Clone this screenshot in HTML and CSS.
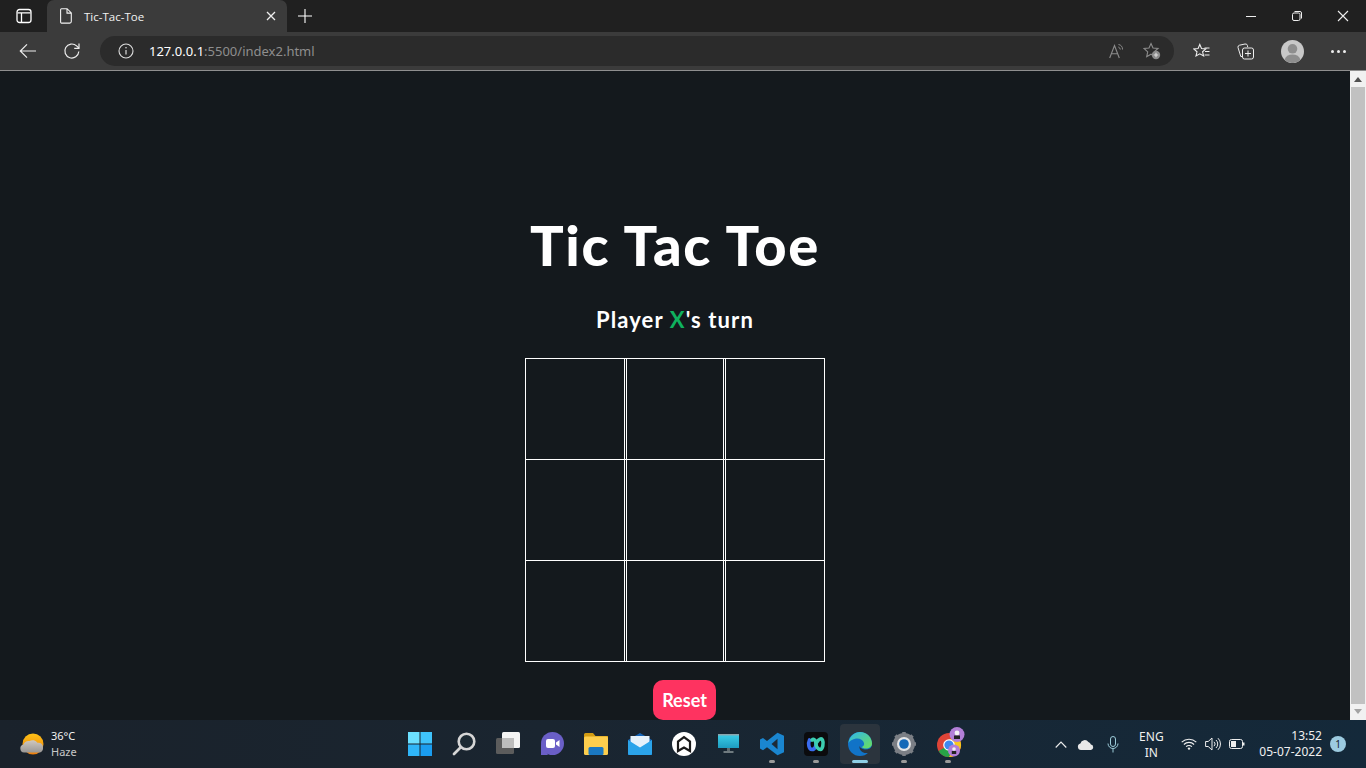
FILE: index.html
```html
<!DOCTYPE html>
<html lang="en">
<head>
    <meta charset="UTF-8">
    <title>Tic-Tac-Toe</title>
    <link rel="stylesheet" href="styles.css">
</head>
<body>

<div class="tabstrip">
    <svg class="tabs-btn" width="16" height="16" viewBox="0 0 16 16"><rect x="1" y="1.5" width="14" height="13" rx="2.5" fill="none" stroke="#fff" stroke-width="1.3"/><path d="M1.5 4.8h13M5.5 4.8v9.5" stroke="#fff" stroke-width="1.3" fill="none"/></svg>
    <div class="tab">
        <svg width="12" height="16" viewBox="0 0 12 16"><path d="M1.5.7h5.6l4.2 4.2v8.6a1.6 1.6 0 0 1-1.6 1.6H1.5A1 1 0 0 1 .6 14V1.700a1 1 0 0 1 .9-1zM7 .9v4.200h4.200" fill="none" stroke="#f2f2f2" stroke-width="1.100"/></svg>
        <span class="tab-title">Tic-Tac-Toe</span>
        <svg class="tab-close" width="10" height="10" viewBox="0 0 10 10"><path d="M1 1l8 8M9 1l-8 8" stroke="#eee" stroke-width="1.300"/></svg>
    </div>
    <svg class="new-tab" width="14" height="14" viewBox="0 0 14 14"><path d="M7 0v14M0 7h14" stroke="#fff" stroke-width="1.100"/></svg>
    <div class="win-btns">
        <svg width="12" height="12" viewBox="0 0 12 12"><path d="M1 6.500h10" stroke="#eee"/></svg>
        <svg width="12" height="12" viewBox="0 0 12 12"><rect x="1.500" y="3" width="7.500" height="7.500" rx="1.500" fill="none" stroke="#eee"/><path d="M3.500 1.500h5.500a1.500 1.500 0 0 1 1.500 1.500v5.500" fill="none" stroke="#eee"/></svg>
        <svg width="12" height="12" viewBox="0 0 12 12"><path d="M1 1l10 10M11 1L1 11" stroke="#eee" stroke-width="1.100"/></svg>
    </div>
</div>

<div class="toolbar">
    <svg class="nav-icon" width="18" height="16" viewBox="0 0 18 16"><path d="M17 8H1.500M8 1.300L1.300 8 8 14.700" fill="none" stroke="#eee" stroke-width="1.200"/></svg>
    <svg class="nav-icon reload" width="18" height="18" viewBox="0 0 18 18"><path d="M15.800 9.500a7 7 0 1 1-2.200-5.600l2.200 2.100" fill="none" stroke="#eee" stroke-width="1.200"/><path d="M16 1.500V6.300h-4.800" fill="none" stroke="#eee" stroke-width="1.200"/></svg>
    <div class="address">
        <svg width="16" height="16" viewBox="0 0 16 16"><circle cx="8" cy="8" r="7" fill="none" stroke="#ddd" stroke-width="1.100"/><path d="M8 7v4.500" stroke="#ddd" stroke-width="1.200"/><circle cx="8" cy="4.800" r=".8" fill="#ddd"/></svg>
        <span class="url"><b>127.0.0.1</b>:5500/index2.html</span>
        <svg class="read-aloud" width="16" height="16" viewBox="0 0 16 16"><path d="M.7 15L5.500 2.500 10.300 15M2.300 10.800h6.400" fill="none" stroke="#8c8c8c" stroke-width="1.100"/><path d="M9.500 1.500a5 5 0 0 1 4 5M9.300 4a3 3 0 0 1 2 2.500" fill="none" stroke="#8c8c8c"/></svg>
        <svg class="fav-add" width="18" height="18" viewBox="0 0 18 18"><path d="M8 1.500l2 4.500 5 .5-3.700 3.300 1 4.800L8 12.200l-4.300 2.500 1-4.800L1 6.500 6 6z" fill="none" stroke="#8c8c8c" stroke-width="1.100"/><circle cx="13" cy="13" r="4.200" fill="#8c8c8c"/><path d="M13 10.800v4.400M10.800 13h4.400" stroke="#e0e0e0" stroke-width="1.100"/></svg>
    </div>
    <svg class="tool-icon fav-list" width="17" height="17" viewBox="0 0 17 17"><path d="M6.800 1.500l1.700 4 4.300.4-3.200 2.900 1 4.200-3.800-2.200L3 13l1-4.200L.8 5.900l4.300-.4z" fill="none" stroke="#eee" stroke-width="1.100"/><path d="M11.500 5h5M12 8.500h4.500M11.500 12h5" stroke="#eee"/></svg>
    <svg class="tool-icon" width="17" height="17" viewBox="0 0 17 17"><path d="M5 13.500H3.800L1 4.500a2 2 0 0 1 1.500-2.300L8 1a2 2 0 0 1 2.400 1.500l.3 1.500" fill="none" stroke="#eee"/><rect x="5.500" y="5" width="11" height="11" rx="2" fill="none" stroke="#eee"/><path d="M11 7.500v6M8 10.500h6" stroke="#eee"/></svg>
    <svg class="avatar" width="23" height="23" viewBox="0 0 23 23"><circle cx="11.500" cy="11.500" r="11.500" fill="#c8c8c8"/><circle cx="11.500" cy="8.800" r="4.800" fill="#8e8e8e"/><path d="M3.500 19.800c1-3.500 4-5.300 8-5.300s7 1.800 8 5.300a11.500 11.500 0 0 1-16 0z" fill="#8e8e8e"/></svg>
    <div class="more"><i></i><i></i><i></i></div>
</div>

<div class="viewport">
    <main class="page">
        <h1 class="title">Tic Tac Toe</h1>
        <p class="turn">Player <span class="mark">X</span>'s turn</p>
        <div class="board">
            <div class="cell"></div><div class="cell"></div><div class="cell"></div>
            <div class="cell"></div><div class="cell"></div><div class="cell"></div>
            <div class="cell"></div><div class="cell"></div><div class="cell"></div>
        </div>
        <button class="reset">Reset</button>
    </main>
    <div class="scrollbar">
        <span class="arrow up"></span>
        <div class="thumb"></div>
        <span class="arrow down"></span>
    </div>
</div>

<footer class="taskbar">
    <div class="weather">
        <svg width="24" height="22" viewBox="0 0 24 22"><defs><linearGradient id="sun" x1="0" y1="0" x2="0" y2="1"><stop offset="0" stop-color="#fdc116"/><stop offset="1" stop-color="#ee7f0e"/></linearGradient><linearGradient id="cloud" x1="0" y1="0" x2="0" y2="1"><stop offset="0" stop-color="#cfc8c0"/><stop offset="1" stop-color="#9a9794"/></linearGradient></defs><circle cx="13" cy="11" r="10.500" fill="url(#sun)"/><path d="M4 19.500a4 4 0 0 1-.5-7.900 5.500 5.500 0 0 1 6-3.600 6 6 0 0 1 8 1.800 4.500 4.500 0 0 1 5.500 4.700 4.800 4.800 0 0 1-3 5z" fill="url(#cloud)"/></svg>
        <div class="weather-text"><span>36°C</span><span class="haze">Haze</span></div>
    </div>

    <div class="task-icons">
        <div class="task"><svg width="24" height="24" viewBox="0 0 24 24"><path d="M0 0h11.500v11.500H0z" fill="#6ce0ff"/><path d="M12.500 0H24v11.500H12.500z" fill="#3fc3fb"/><path d="M0 12.500h11.500V24H0z" fill="#2fb5f8"/><path d="M12.500 12.500H24V24H12.500z" fill="#1a9df0"/></svg></div>
        <div class="task"><svg width="24" height="24" viewBox="0 0 24 24"><circle cx="14.500" cy="9.500" r="7.800" fill="#1d2a33" stroke="#d6d6d6" stroke-width="2.600"/><path d="M8.500 15.500L2 22" stroke="#d6d6d6" stroke-width="2.800" stroke-linecap="round"/></svg></div>
        <div class="task"><svg width="24" height="24" viewBox="0 0 24 24"><rect x="6" y="0" width="18" height="16" rx="1.500" fill="#f4f4f4"/><rect x="0" y="6" width="18" height="16" rx="1.500" fill="#5c5c5c"/><rect x="6" y="6" width="12" height="10" fill="#bdbdbd"/></svg></div>
        <div class="task"><svg width="24" height="24" viewBox="0 0 24 24"><circle cx="12.500" cy="11.500" r="11.500" fill="#6a5fc7"/><path d="M1 11.500V23h7z" fill="#6a5fc7"/><rect x="6" y="7" width="9" height="9" rx="2" fill="#fff"/><path d="M16 10.500l3.500-2.500v7L16 12.500z" fill="#fff"/></svg></div>
        <div class="task"><svg width="24" height="22" viewBox="0 0 24 22"><path d="M0 1.500A1.500 1.500 0 0 1 1.500 0H9l2.500 3H24v4H0z" fill="#d39c12"/><rect y="3.500" width="24" height="18.500" rx="1.500" fill="#fdce4d"/><rect x="4.500" y="14" width="15" height="8" rx="1.500" fill="#1a78c2"/></svg></div>
        <div class="task"><svg width="24" height="22" viewBox="0 0 24 22"><path d="M0 7L12 0l12 7v15H0z" fill="#1565b8"/><path d="M2.500 3h19v10l-9.500 5-9.500-5z" fill="#e6f2fb"/><path d="M0 7l12 7.500L24 7v13.500a1.500 1.500 0 0 1-1.500 1.500h-21A1.500 1.500 0 0 1 0 20.500z" fill="#2ba4ea"/></svg></div>
        <div class="task"><svg width="24" height="24" viewBox="0 0 24 24"><circle cx="12" cy="12" r="12" fill="#fff"/><path d="M6 19V9.500L12 5l6 4.500V19l-6-3.500z" fill="none" stroke="#1b1b1b" stroke-width="2.200"/></svg></div>
        <div class="task"><svg width="21" height="20" viewBox="0 0 21 20"><defs><linearGradient id="screen" x1="0" y1="0" x2="0" y2="1"><stop offset="0" stop-color="#3ccfe8"/><stop offset="1" stop-color="#1d9cc0"/></linearGradient></defs><rect width="21" height="14" fill="url(#screen)"/><rect width="21" height="1.500" fill="#8aa5ad"/><path d="M9 14h3v3H9z" fill="#5f6b70"/><rect x="5.500" y="17" width="10" height="2" fill="#6f7a7f"/></svg></div>
        <div class="task running"><svg width="24" height="24" viewBox="0 0 24 24"><path d="M17.500.8L24 3.800v16.400l-6.500 3-10.500-8-4 3L0 16.500v-9L3 6l4 3z" fill="#1a86d0"/><path d="M17.500 6.800L11.500 12l6 5.200z" fill="#1d2a35"/></svg></div>
        <div class="task running"><svg width="24" height="24" viewBox="0 0 24 24"><rect width="24" height="24" rx="4" fill="#0b0b0d"/><path d="M5.500 8c-1.500 3-1 9.500 2.500 9.500S12 12 12 12" fill="none" stroke="#3a6cf0" stroke-width="3.600" stroke-linecap="round"/><path d="M8 8c2-2 4 1 4 4s2.500 5.500 4.500 5.500S20 11 18.500 8c-1-2-4-1-5.500 2" fill="none" stroke="#3ccdb0" stroke-width="3.600" stroke-linecap="round"/></svg></div>
        <div class="task active"><svg width="24" height="24" viewBox="0 0 24 24"><defs><linearGradient id="edge" x1="0" y1="0" x2="1" y2="1"><stop offset="0" stop-color="#2fb5ee"/><stop offset="1" stop-color="#6be05a"/></linearGradient></defs><circle cx="12" cy="12" r="12" fill="#1173c7"/><path d="M.5 11C1.500 4 6.500 0 12 0c7 0 12 5.500 12 11.500 0 3.500-3 5-6 5-2 0-4-.7-4.500-1.500 2-.5 3-2 2.500-4C15 7.500 11.500 6 8 6.500 4.500 7 1.500 9 .5 11z" fill="url(#edge)"/><path d="M24 14c-1 2.500-3.500 3.500-6 3.500-3 0-6-1.500-6.500-3.500-.5 2.500 1 5.500 5 7L21 21l4-4z" fill="#2b343d"/></svg></div>
        <div class="task running"><svg width="24" height="24" viewBox="0 0 24 24"><circle cx="12" cy="12" r="8.500" fill="none" stroke="#7b7f85" stroke-width="5"/><path d="M12 0v24M0 12h24M3.500 3.500l17 17M20.500 3.500l-17 17" stroke="#7b7f85" stroke-width="3.500"/><circle cx="12" cy="12" r="7" fill="#e4e6e8"/><circle cx="12" cy="12" r="4.800" fill="#1469b8"/></svg></div>
        <div class="task running"><svg class="chrome" width="30" height="30" viewBox="0 0 30 30"><circle cx="12" cy="18" r="12" fill="#de4437"/><path d="M1.600 24A12 12 0 0 0 12 30l6-10.300-6-1.700z" fill="#27a346"/><path d="M12 30a12 12 0 0 0 10.400-18H12l6 8z" fill="#f8c81c"/><circle cx="12" cy="18" r="5.800" fill="#fff"/><circle cx="12" cy="18" r="4.600" fill="#3f88f0"/><circle cx="20" cy="7.500" r="7.500" fill="#b27fd8"/><circle cx="20" cy="6" r="2.400" fill="#f2f2f2"/><rect x="17" y="8.500" width="6" height="3.500" fill="#222"/><circle cx="17" cy="23.500" r="6" fill="#b27fd8"/><circle cx="17" cy="22" r="1.800" fill="#f2f2f2"/><rect x="14.800" y="24" width="4.400" height="3" fill="#222"/></svg></div>
    </div>

    <div class="tray">
        <svg width="12" height="7" viewBox="0 0 12 7"><path d="M.7 6.500L6 1l5.300 5.500" fill="none" stroke="#eee" stroke-width="1.100"/></svg>
        <svg class="cloud" width="17" height="11" viewBox="0 0 17 11"><path d="M4 11a3.300 3.300 0 0 1-.6-6.500 4.500 4.500 0 0 1 8-1.500 3.700 3.700 0 0 1 2.500 2.500A2.800 2.800 0 0 1 14 11z" fill="#e8e8e8"/></svg>
        <svg class="mic" width="12" height="17" viewBox="0 0 12 17"><rect x="3.500" y=".5" width="5" height="10" rx="2.500" fill="none" stroke="#9ccbd8"/><path d="M1 7.500a5 5 0 0 0 10 0M6 12.500V16.500" fill="none" stroke="#9ccbd8"/></svg>
        <div class="lang"><span>ENG</span><span>IN</span></div>
        <svg class="wifi" width="16" height="12" viewBox="0 0 16 12"><path d="M.7 4.200a10.500 10.500 0 0 1 14.600 0M2.900 6.500a7.300 7.300 0 0 1 10.200 0M5.100 8.700a4.200 4.200 0 0 1 5.800 0" fill="none" stroke="#eee" stroke-width="1.100"/><circle cx="8" cy="10.600" r="1.200" fill="#eee"/></svg>
        <svg class="speaker" width="16" height="14" viewBox="0 0 16 14"><path d="M.6 4.500h2.600L7 1v12L3.200 9.500H.6z" fill="none" stroke="#eee"/><path d="M9 4.800a3 3 0 0 1 0 4.400M11 3a5.500 5.500 0 0 1 0 8M13 1.200a8 8 0 0 1 0 11.600" fill="none" stroke="#eee"/></svg>
        <svg class="battery" width="16" height="10" viewBox="0 0 16 10"><rect x=".5" y=".5" width="13" height="9" rx="2" fill="none" stroke="#eee"/><rect x="2" y="2" width="5" height="6" fill="#eee"/><rect x="14" y="3.500" width="1.500" height="3" fill="#eee"/></svg>
        <div class="clock"><span>13:52</span><span>05-07-2022</span></div>
        <div class="badge">1</div>
    </div>
</footer>

</body>
</html>
```

FILE: styles.css
```css
/* Reset */
* {
    margin: 0;
    padding: 0;
    box-sizing: border-box;
}
html, body {
    height: 100%;
    overflow: hidden;
}
body {
    display: flex;
    flex-direction: column;
    font-family: "Open Sans", "Noto Sans", sans-serif;
    background: #14191d;
    color: #fff;
}
svg {
    display: block;
    flex: none;
}

/* Browser tabs */
.tabstrip {
    height: 32px;
    background: #202020;
    display: flex;
    align-items: flex-end;
    flex: none;
}
.tabs-btn {
    margin: 0 0 8px 16px;
}
.tab {
    width: 240px;
    height: 32px;
    margin-left: 15px;
    padding: 0 11px 0 13px;
    background: #3b3b3b;
    border-radius: 7px 7px 0 0;
    display: flex;
    align-items: center;
}
.tab-title {
    margin-left: 12px;
    font-size: 11.500px;
    color: #f2f2f2;
    flex: 1;
}
.new-tab {
    margin: 0 0 9px 11px;
}
.win-btns {
    margin-left: auto;
    height: 32px;
    display: flex;
    align-items: center;
    gap: 34px;
    padding-right: 17px;
}

/* Address bar row */
.toolbar {
    height: 39px;
    background: #3b3b3b;
    border-bottom: 1px solid #8f8f8f;
    display: flex;
    align-items: center;
    flex: none;
    padding-left: 19px;
}
.reload {
    margin-left: 26px;
}
.address {
    width: 1074px;
    height: 30px;
    margin-left: 19px;
    padding: 0 13px 0 18px;
    background: #2b2b2b;
    border-radius: 15px;
    display: flex;
    align-items: center;
}
.url {
    margin-left: 15px;
    font-family: "Noto Sans", sans-serif;
    font-size: 13px;
    color: #8e8e8e;
    flex: 1;
}
.url b {
    font-weight: 400;
    color: #fff;
}
.fav-add {
    margin-left: 18px;
}
.fav-list {
    margin-left: 19px;
}
.tool-icon + .tool-icon {
    margin-left: 27px;
}
.avatar {
    margin-left: 27px;
}
.more {
    margin-left: 27px;
    display: flex;
    gap: 3px;
}
.more i {
    width: 3px;
    height: 3px;
    border-radius: 50%;
    background: #eee;
}

/* Page content */
.viewport {
    flex: 1;
    display: flex;
    min-height: 0;
    background: #14191d;
}
.page {
    flex: 1;
    display: flex;
    flex-direction: column;
    align-items: center;
    padding-top: 139px;
    font-family: Lato, "Noto Sans", sans-serif;
}
.title {
    font-size: 56px;
    line-height: 70px;
    font-weight: 900;
    letter-spacing: 1.700px;
    color: #fff;
}
.turn {
    margin-top: 25px;
    font-size: 22px;
    line-height: 30px;
    font-weight: 700;
    letter-spacing: 1.100px;
}
.mark {
    color: #0fb25f;
}
/* horizontal lines run through the 1px column gaps, so they live on the board */
.board {
    margin-top: 23px;
    display: grid;
    grid-template-columns: 100px 98px 100px;
    grid-template-rows: repeat(3, 1fr);
    column-gap: 1px;
    width: 300px;
    height: 304px;
    background: repeating-linear-gradient(#fff 0 1px, transparent 1px 101px);
}
.cell {
    border-left: 1px solid #fff;
    border-right: 1px solid #fff;
}
.reset {
    margin-top: 18px;
    margin-left: 19px;
    width: 63px;
    height: 40px;
    background: #fe3360;
    border: none;
    border-radius: 10px;
    color: #fff;
    font-family: Lato, sans-serif;
    font-size: 18px;
    font-weight: 700;
}

/* Scrollbar */
.scrollbar {
    width: 16px;
    background: #f1f1f1;
    display: flex;
    flex-direction: column;
    align-items: center;
    padding: 6px 0 6px;
    flex: none;
}
.thumb {
    width: 14px;
    flex: 1;
    margin: 5px 0;
    background: #c1c1c1;
}
.arrow {
    width: 0;
    height: 0;
    border-left: 4px solid transparent;
    border-right: 4px solid transparent;
}
.up {
    border-bottom: 5px solid #505050;
}
.down {
    border-top: 5px solid #a3a3a3;
}

/* Taskbar */
.taskbar {
    height: 48px;
    flex: none;
    position: relative;
    background: linear-gradient(90deg, #1a222b, #1a2530 40%, #14293a);
    display: flex;
    align-items: center;
    font-family: "Noto Sans", "Open Sans", sans-serif;
    font-size: 11px;
}
.weather {
    display: flex;
    align-items: center;
    margin-left: 20px;
    gap: 7px;
}
.weather-text {
    display: flex;
    flex-direction: column;
    line-height: 16px;
    color: #f2f2f2;
}
.haze {
    color: #c8c8c8;
}
.task-icons {
    position: absolute;
    left: 398px;
    top: 0;
    height: 48px;
    display: flex;
}
.task {
    width: 44px;
    height: 48px;
    display: flex;
    align-items: center;
    justify-content: center;
    position: relative;
}
.task.running::after, .task.active::after {
    content: '';
    position: absolute;
    left: 19px;
    bottom: 5px;
    width: 6px;
    height: 3px;
    border-radius: 2px;
    background: #9a9a9a;
}
.task.active {
    width: 40px;
    height: 40px;
    margin: 4px 2px;
    background: #2b343d;
    border-radius: 4px;
}
.task.active::after {
    left: 12px;
    width: 16px;
    bottom: 1px;
    background: #8fcfe6;
}
.chrome {
    margin: -4px 0 0 8px;
}
.tray {
    margin-left: auto;
    display: flex;
    align-items: center;
    padding-right: 20px;
    font-size: 12px;
}
.cloud {
    margin-left: 10px;
}
.mic {
    margin-left: 13px;
}
.lang {
    width: 40px;
    margin: 2px 0 0 12px;
    display: flex;
    flex-direction: column;
    align-items: center;
    line-height: 16px;
    color: #f0f0f0;
}
.wifi {
    margin-left: 10px;
}
.speaker {
    margin-left: 8px;
}
.battery {
    margin-left: 8px;
}
.clock {
    margin-left: 14px;
    display: flex;
    flex-direction: column;
    align-items: flex-end;
    line-height: 16px;
    color: #f0f0f0;
}
.badge {
    width: 16px;
    height: 16px;
    margin-left: 8px;
    border-radius: 50%;
    background: #9ccbe0;
    color: #14222c;
    font-size: 10px;
    line-height: 16px;
    text-align: center;
}
```
